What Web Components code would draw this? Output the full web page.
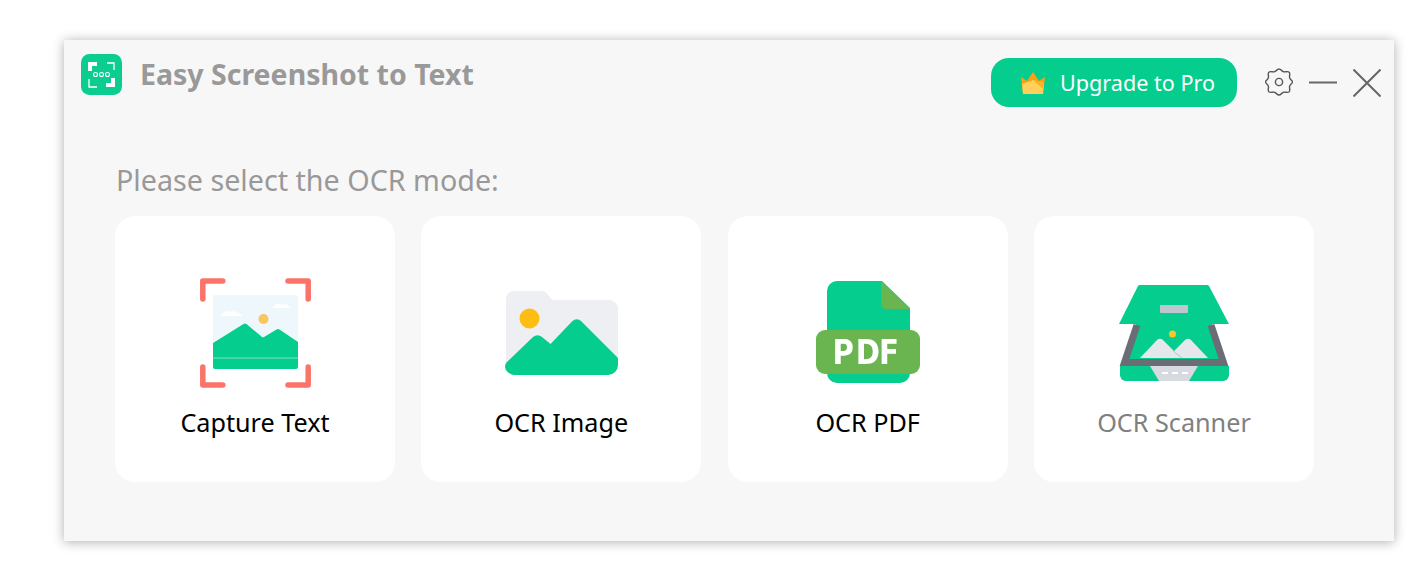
<!DOCTYPE html>
<html lang="en"><head><meta charset="utf-8"><title>Easy Screenshot to Text</title>
<style>
html,body{margin:0;background:#fff}
body{padding:40px 0 0 64px;font-family:"Noto Sans","Open Sans",sans-serif;height:581px;box-sizing:border-box;overflow:hidden}
svg{display:block}
.soft{filter:blur(.45px)}
</style></head><body>
<app-window>
  <title-bar slot="bar" heading="Easy Screenshot to Text"></title-bar>
  <mode-list heading="Please select the OCR mode:">
    <mode-card>
      <svg slot="icon" class="soft" width="120" height="120" viewBox="195 272 120 120">
        <rect x="213" y="295" width="85" height="74" rx="2" fill="#eef8fc"/>
        <path d="M222 315c1-4 6-5 8-3 2-1 6-1 7 1 2 0 4 1 5 3h-22c0-1 1-1 2-1z" fill="#fff"/>
        <path d="M275 306c1-3 5-3 7-1 2-1 5-1 6 1 1 0 3 1 3 2h-18c0-1 1-2 2-2z" fill="#fff"/>
        <circle cx="263.500" cy="319" r="5" fill="#f8c55e"/>
        <path d="M213 343L243.500 324a3 3 0 0 1 3 0L262 337a2 2 0 0 0 2 0L276.500 329.500a3 3 0 0 1 3 0L298 342V367a2 2 0 0 1-2 2H215a2 2 0 0 1-2-2z" fill="#05cd8e"/>
        <path d="M213 358h85" stroke="#7fe3c3" stroke-width="1.200" fill="none"/>
        <g stroke="#fb7467" stroke-width="5.500" stroke-linecap="round" stroke-linejoin="round" fill="none">
          <path d="M202.800 299v-18h20"/><path d="M288 281h20.200v18"/>
          <path d="M202.800 367v18h20"/><path d="M288 385h20.200v-18"/>
        </g>
      </svg>
      Capture Text
    </mode-card>
    <mode-card>
      <svg slot="icon" class="soft" width="120" height="120" viewBox="501 272 120 120">
        <path d="M506 299a8 8 0 0 1 8-8h28a6 6 0 0 1 4 1.500l5 6a5 5 0 0 0 4 1.500h54a9 9 0 0 1 9 9v56a10 10 0 0 1-10 10h-92a10 10 0 0 1-10-10z" fill="#edeff2"/>
        <circle cx="529.500" cy="318.500" r="10" fill="#fdbd13"/>
        <path d="M507 362l26-25a7 7 0 0 1 9 0l8.500 7 22-23a6 6 0 0 1 8.500 0l36 36a6 6 0 0 1 1 2v6a10 10 0 0 1-10 10h-92c-9 0-14-8-9-13z" fill="#05cd8e"/>
      </svg>
      OCR Image
    </mode-card>
    <mode-card>
      <svg slot="icon" class="soft" width="120" height="120" viewBox="808 272 120 120">
        <path d="M837 281h45l28 27v65a10 10 0 0 1-10 10h-63a10 10 0 0 1-10-10v-82a10 10 0 0 1 10-10z" fill="#05cd8e"/>
        <path d="M881 281l29 28h-24a5 5 0 0 1-5-5z" fill="#6bb551"/>
        <rect x="816" y="330" width="104" height="44" rx="9" fill="#6bb551"/>
        <text transform="translate(832.500 363.500) scale(.86 1)" x="0 27 54" y="0" font-family="DejaVu Sans" font-weight="700" font-size="34" fill="#fff">PDF</text>
      </svg>
      OCR PDF
    </mode-card>
    <mode-card muted>
      <svg slot="icon" class="soft" width="120" height="120" viewBox="1114 272 120 120">
        <path d="M1136 324h76l11 38H1126z" fill="#05cd8e"/>
        <path d="M1140 358l17-18a4 4 0 0 1 6 0l11 11 11-11a4 4 0 0 1 6 0l17 18z" fill="#e4e7eb"/>
        <path d="M1173 351l9 7" stroke="#bcc2ca" stroke-width="1" fill="none"/>
        <circle cx="1172.500" cy="334" r="3.500" fill="#fcc42d"/>
        <path d="M1137 325L1124.500 362.500H1223.500L1211 325" stroke="#6a6d75" stroke-width="7" fill="none" stroke-linejoin="miter"/>
        <path d="M1140 285h67a2 2 0 0 1 2 1L1229 324h-110l19-38a2 2 0 0 1 2-1z" fill="#05cd8e"/>
        <rect x="1160" y="305" width="28" height="8" rx="1" fill="#c0c6d0"/>
        <path d="M1120 366h109v9a6 6 0 0 1-6 6h-97a6 6 0 0 1-6-6z" fill="#05cd8e"/>
        <path d="M1150 366h48l-9 15h-30z" fill="#d7dbe1"/>
        <path d="M1162 373h6M1172 373h6M1182 373h6" stroke="#fff" stroke-width="1.800" fill="none"/>
      </svg>
      OCR Scanner
    </mode-card>
  </mode-list>
</app-window>
<script>
class AppWindow extends HTMLElement{constructor(){super();this.attachShadow({mode:'open'}).innerHTML=`<style>
:host{display:flex;flex-direction:column;box-sizing:border-box;width:1330px;height:501px;background:#f7f7f7;box-shadow:0 1px 11px rgba(0,0,0,.32)}
</style><slot name="bar"></slot><slot></slot>`}}
class TitleBar extends HTMLElement{constructor(){super();this.attachShadow({mode:'open'}).innerHTML=`<style>
:host{display:flex;align-items:flex-start;padding:14px 13px 0 17px;height:62px;box-sizing:border-box}
svg{display:block;flex:none}
.logo{filter:blur(.3px)}
h1{margin:-1px 0 0 18px;font:700 28.500px/42px "Noto Sans",sans-serif;color:#999;flex:1;white-space:nowrap}
button{all:unset;box-sizing:border-box;display:flex;align-items:center;width:246px;height:49px;margin:4px 28px 0 0;padding-left:30px;gap:15px;border-radius:18px;background:#05cd8e;color:#fff;font:400 21.600px/49px "Noto Sans",sans-serif;white-space:nowrap}
.ctl{margin-top:15px;margin-left:16px}
.gear{margin-left:0;margin-top:14px}
</style>
<svg class="logo" width="41" height="41" viewBox="0 0 41 41"><rect width="41" height="41" rx="8.500" fill="#0bcd8f"/>
<g fill="none" stroke="#fff"><path d="M9 17V10h7" stroke-width="4"/><path d="M26 9h7v7M8 25v8h8" stroke-width="1.300"/><path d="M32 24v7h-7" stroke-width="4"/>
<circle cx="14.500" cy="20.500" r="2" stroke-width="1.100"/><circle cx="20.500" cy="20.500" r="2" stroke-width="1.100"/><circle cx="26.500" cy="20.500" r="2" stroke-width="1.100"/></g></svg>
<h1></h1>
<button><svg width="24" height="22" viewBox="0 0 24 22"><path d="M0 5l6 4 6-9 6 9 6-4-2 17H2z" fill="#ff9f0f"/><path d="M1 11l11 11H2zM1.500 12L12 8l11 3-1 11H2z" fill="#ffd05c"/><path d="M12 8l11 3-1 6-10-9z" fill="#ffb01f"/></svg><span>Upgrade to Pro</span></button>
<svg class="ctl gear" width="28" height="28" viewBox="0 0 28 28" fill="none" stroke="#555" stroke-width="1.400"><path d="M14 1c2 0 2.800 2.500 4.800 2.800 2 .3 4.200-1 5.500.6 1.200 1.600-.3 3.800.4 5.700.6 1.700 2.800 2.300 2.800 3.900s-2.200 2.200-2.800 3.900c-.7 1.900.8 4.100-.4 5.700-1.300 1.600-3.500.3-5.500.6-2 .3-2.800 2.800-4.800 2.800s-2.800-2.500-4.800-2.800c-2-.3-4.200 1-5.500-.6-1.200-1.600.3-3.800-.4-5.700C2.700 16.200.5 15.600.5 14s2.200-2.200 2.800-3.900c.7-1.900-.8-4.100.4-5.700 1.300-1.600 3.500-.3 5.500-.6 2-.3 2.800-2.800 4.800-2.800z"/><circle cx="14" cy="14" r="3.600"/></svg>
<svg class="ctl" width="28" height="28" viewBox="0 0 28 28"><path d="M0 13.500h28" stroke="#666" stroke-width="2"/></svg>
<svg class="ctl" width="28" height="28" viewBox="0 0 28 28"><path d="M.5.500l27 27M27.500.500l-27 27" stroke="#666" stroke-width="2"/></svg>`;
this.shadowRoot.querySelector('h1').textContent=this.getAttribute('heading')}}
class ModeList extends HTMLElement{constructor(){super();this.attachShadow({mode:'open'}).innerHTML=`<style>
:host{display:block;padding:0 0 0 51px}
h2{margin:0;height:114px;padding:59px 0 0 1px;box-sizing:border-box;font:400 28.700px/38px "Noto Sans",sans-serif;color:#999;white-space:nowrap}
.grid{display:flex;justify-content:space-between;width:1199px}
</style><h2></h2><div class="grid"><slot></slot></div>`;
this.shadowRoot.querySelector('h2').textContent=this.getAttribute('heading')}}
class ModeCard extends HTMLElement{constructor(){super();this.attachShadow({mode:'open'}).innerHTML=`<style>
:host{display:flex;flex-direction:column;align-items:center;box-sizing:border-box;width:280px;height:266px;padding-top:56px;background:#fff;border-radius:20px;color:#000;font:400 25.200px/34px "Noto Sans",sans-serif;white-space:nowrap}
:host([muted]){color:#808080}
.i{height:120px;margin-bottom:13px}
</style><div class="i"><slot name="icon"></slot></div><slot></slot>`}}
customElements.define('app-window',AppWindow);
customElements.define('title-bar',TitleBar);
customElements.define('mode-list',ModeList);
customElements.define('mode-card',ModeCard);
</script>
</body></html>
